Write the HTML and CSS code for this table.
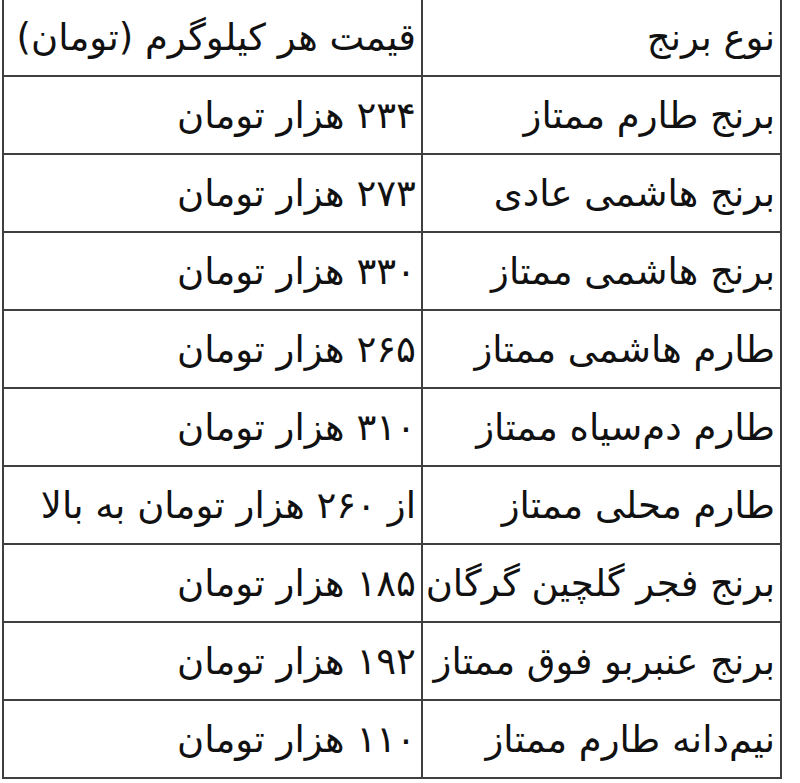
FILE: index.html
```html
<!DOCTYPE html>
<html lang="fa">
<head>
<meta charset="utf-8">
<title>قیمت برنج</title>
<link rel="stylesheet" href="styles.css">
</head>
<body>
<table class="price-table" dir="rtl">
  <tbody>
    <tr><td class="type">نوع برنج</td><td class="price">قیمت هر کیلوگرم (تومان)</td></tr>
    <tr><td class="type">برنج طارم ممتاز</td><td class="price">۲۳۴ هزار تومان</td></tr>
    <tr><td class="type">برنج هاشمی عادی</td><td class="price">۲۷۳ هزار تومان</td></tr>
    <tr><td class="type">برنج هاشمی ممتاز</td><td class="price">۳۳۰ هزار تومان</td></tr>
    <tr><td class="type">طارم هاشمی ممتاز</td><td class="price">۲۶۵ هزار تومان</td></tr>
    <tr><td class="type">طارم دم‌سیاه ممتاز</td><td class="price">۳۱۰ هزار تومان</td></tr>
    <tr><td class="type">طارم محلی ممتاز</td><td class="price">از ۲۶۰ هزار تومان به بالا</td></tr>
    <tr><td class="type">برنج فجر گلچین گرگان</td><td class="price">۱۸۵ هزار تومان</td></tr>
    <tr><td class="type">برنج عنبربو فوق ممتاز</td><td class="price">۱۹۲ هزار تومان</td></tr>
    <tr><td class="type">نیم‌دانه طارم ممتاز</td><td class="price">۱۱۰ هزار تومان</td></tr>
  </tbody>
</table>
</body>
</html>
```
FILE: styles.css
```css
html, body {
  margin: 0;
  padding: 0;
  background: #ffffff;
}
body {
  font-family: "DejaVu Sans", sans-serif;
  color: #111111;
}
.price-table {
  border-collapse: collapse;
  direction: rtl;
  margin: -3px 0 0 2px;
  width: 780px;
  table-layout: fixed;
}
.price-table td {
  border: 2px solid #3f3f3f;
  height: 76px;
  padding: 0 5px 0 2px;
  text-align: right;
  vertical-align: middle;
  font-size: 37px;
  line-height: 1;
  white-space: nowrap;
  overflow: hidden;
}
.price-table td.type {
  width: 350px;
}
```
